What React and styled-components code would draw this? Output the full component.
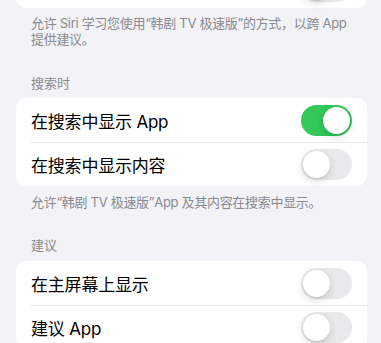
import React from "react";
import styled, { createGlobalStyle } from "styled-components";

const Global = createGlobalStyle`
  html, body { margin: 0; padding: 0; background: #f2f2f7; }
  body {
    font-family: "Inter", "Noto Sans CJK SC", sans-serif;
    -webkit-font-smoothing: antialiased;
    overflow: hidden;
  }
`;

const Page = styled.div`
  width: 381px;
  height: 343px;
  overflow: hidden;
  background: #f2f2f7;
  display: flex;
  flex-direction: column;
`;

const Card = styled.div`
  margin: ${(p) => p.$top || 0}px 14px 0 16px;
  background: #ffffff;
  border-radius: 10px;
  display: flex;
  flex-direction: column;
  flex-shrink: 0;
`;

const Row = styled.div`
  height: 44px;
  display: flex;
  align-items: center;
  justify-content: space-between;
  padding: 0 15px 0 15px;
  position: relative;
  box-sizing: border-box;
  font-size: 17px;
  color: #000;
  letter-spacing: -0.2px;
  & + &::before {
    content: "";
    position: absolute;
    left: 15px;
    right: 0;
    top: 0;
    height: 1px;
    background: #e7e7ec;
  }
`;

const Footer = styled.div`
  padding: ${(p) => p.$pt || 7}px 20px 0 31px;
  font-size: 13px;
  line-height: 16px;
  letter-spacing: -0.3px;
  color: #8a8a8e;
`;

const Header = styled.div`
  margin-top: ${(p) => p.$mt || 28}px;
  padding: 0 31px;
  font-size: 13px;
  line-height: 16px;
  color: #8a8a8e;
`;

const Track = styled.div`
  width: 51px;
  height: 31px;
  border-radius: 16px;
  background: ${(p) => (p.$on ? "#34c759" : "#e9e9eb")};
  position: relative;
  flex-shrink: 0;
  margin-left: auto;
`;

const Knob = styled.div`
  position: absolute;
  top: 2px;
  left: ${(p) => (p.$on ? 22 : 2)}px;
  width: 27px;
  height: 27px;
  border-radius: 50%;
  background: #fff;
  box-shadow: 0 3px 8px rgba(0, 0, 0, 0.15), 0 1px 1px rgba(0, 0, 0, 0.06);
`;

const Toggle = ({ on }) => (
  <Track $on={on}>
    <Knob $on={on} />
  </Track>
);

export default function App() {
  return (
    <Page>
      <Global />
      <Card $top={-36}>
        <Row>
          <Toggle on={false} />
        </Row>
      </Card>
      <Footer $pt={7}>
        允许 Siri 学习您使用“韩剧 TV 极速版”的方式，以跨 App
        <br />
        提供建议。
      </Footer>
      <Header $mt={28}>搜索时</Header>
      <Card $top={7}>
        <Row>
          <span>在搜索中显示 App</span>
          <Toggle on={true} />
        </Row>
        <Row>
          <span>在搜索中显示内容</span>
          <Toggle on={false} />
        </Row>
      </Card>
      <Footer $pt={8}>允许“韩剧 TV 极速版”App 及其内容在搜索中显示。</Footer>
      <Header $mt={27}>建议</Header>
      <Card $top={8}>
        <Row>
          <span>在主屏幕上显示</span>
          <Toggle on={false} />
        </Row>
        <Row>
          <span>建议 App</span>
          <Toggle on={false} />
        </Row>
      </Card>
    </Page>
  );
}
